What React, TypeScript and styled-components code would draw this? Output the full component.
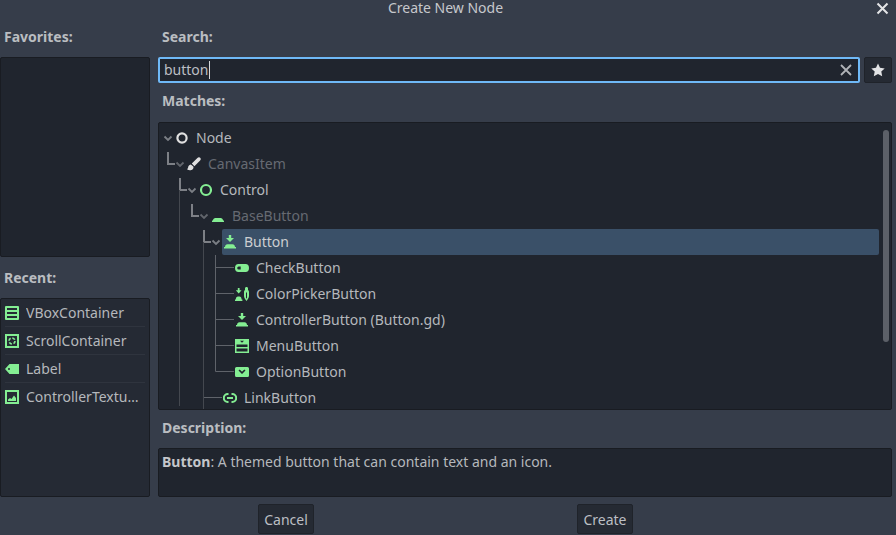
import React from "react";
import styled, { createGlobalStyle } from "styled-components";

const Global = createGlobalStyle`
  html, body { margin: 0; padding: 0; background: #363d4a; }
  body { font-family: "Noto Sans", sans-serif; font-size: 14px; color: #bcbfc3; }
  * { box-sizing: border-box; }
`;

const Window = styled.div`
  position: relative;
  width: 896px;
  height: 535px;
  overflow: hidden;
  background: #363d4a;
`;
const TitleBar = styled.div`
  height: 16px;
  line-height: 16px;
  text-align: center;
  color: #c6c8cc;
  font-size: 14px;
  transform: translateX(-2.5px);
`;
const CloseButton = styled.svg`
  position: absolute;
  right: 7px;
  top: 2px;
  width: 13px;
  height: 13px;
`;
const Columns = styled.div`
  display: grid;
  grid-template-columns: 150px 734px;
  column-gap: 8px;
  padding-top: 10px;
`;
const Column = styled.div`
  display: flex;
  flex-direction: column;
`;
const Heading = styled.div<{ $gap: number; $indent?: number }>`
  height: 21px;
  line-height: 21px;
  font-weight: 700;
  font-size: 14px;
  color: #babdc1;
  margin-bottom: ${(p) => p.$gap}px;
  padding-left: ${(p) => p.$indent ?? 4}px;
`;
const Panel = styled.div<{ $h: number; $mb?: number; $light?: boolean }>`
  position: relative;
  height: ${(p) => p.$h}px;
  margin-bottom: ${(p) => p.$mb ?? 0}px;
  background: ${(p) => (p.$light ? "#252a34" : "#20252e")};
  border: 1px solid #191c22;
  border-radius: 2px;
  overflow: hidden;
`;
const RecentList = styled.div`
  padding: 0;
`;
const RecentRow = styled.div`
  display: flex;
  align-items: center;
  height: 28px;
  margin: 0 4px;
  border-bottom: 1px solid #2f343e;
  &:last-child { border-bottom: none; }
`;
const RecentLabel = styled.span`
  flex: 1;
  min-width: 0;
  white-space: nowrap;
  overflow: hidden;
  text-overflow: ellipsis;
  color: #b5b8bc;
  line-height: 28px;
  margin-right: 4px;
`;
const SearchRow = styled.div`
  display: flex;
  gap: 4px;
  height: 26px;
  margin-bottom: 7px;
`;
const SearchBox = styled.div`
  flex: 1;
  display: flex;
  align-items: center;
  padding: 0 6px 0 4px;
  background: #20252e;
  border: 2px solid #6fb9f7;
  border-radius: 2px;
`;
const SearchText = styled.span`
  color: #bcbfc3;
  line-height: 22px;
`;
const Caret = styled.span`
  display: inline-block;
  width: 1px;
  height: 18px;
  background: #d6d8da;
`;
const Spacer = styled.div`
  flex: 1;
`;
const StarButton = styled.div`
  width: 28px;
  display: flex;
  align-items: center;
  justify-content: center;
  background: #252a33;
  border: 1px solid #1f232a;
  border-radius: 2px;
`;
const TreeLines = styled.svg`
  position: absolute;
  left: -1px;
  top: -1px;
  width: 734px;
  height: 288px;
  pointer-events: none;
`;
const TreeBody = styled.div`
  padding-top: 2px;
`;
const Row = styled.div<{ $depth: number }>`
  position: relative;
  display: flex;
  align-items: center;
  height: 26px;
  padding-left: ${(p) => 3 + p.$depth * 12}px;
`;
const Chevron = styled.svg<{ $hidden?: boolean }>`
  width: 12px;
  height: 12px;
  margin-right: 1px;
  flex: none;
  visibility: ${(p) => (p.$hidden ? "hidden" : "visible")};
`;
const Highlight = styled.div`
  display: flex;
  align-items: center;
  width: 657px;
  height: 26px;
  margin-left: -1px;
  padding-left: 1px;
  background: #3a5068;
  border-radius: 2px;
`;
const IconSlot = styled.svg`
  width: 14px;
  height: 14px;
  margin-right: 7px;
  flex: none;
`;
const NodeName = styled.span<{ $dim?: boolean; $bright?: boolean }>`
  color: ${(p) => (p.$dim ? "#666a72" : p.$bright ? "#ccced1" : "#b5b8bc")};
  line-height: 26px;
  white-space: nowrap;
`;
const Scrollbar = styled.div`
  position: absolute;
  right: 2px;
  top: 7px;
  width: 6px;
  height: 212px;
  background: #5c6068;
  border-radius: 3px;
`;
const Description = styled.div`
  padding: 3px 3px;
  line-height: 20px;
  color: #b5b8bc;
  b { color: #c4c6ca; font-weight: 700; }
`;
const Buttons = styled.div`
  display: flex;
  height: 30px;
  margin-top: 7px;
`;
const Button = styled.div<{ $offset?: number }>`
  width: 56px;
  height: 30px;
  margin-left: ${(p) => p.$offset ?? 0}px;
  line-height: 30px;
  text-align: center;
  background: #252a33;
  border: 1px solid #1f232a;
  border-radius: 2px;
  color: #bcbfc3;
`;

const G = "#84ee93";

const IconNode = ({ c, r }: { c: string; r: number }) => (
  <IconSlot viewBox="0 0 14 14">
    <circle cx="7" cy="7" r={r} fill="none" stroke={c} strokeWidth="2.200" />
  </IconSlot>
);
const IconBrush = () => (
  <IconSlot viewBox="0 0 14 14">
    <path d="M12.600.4c-.8-.5-1.500-.1-2.200.5L4.800 6.600l2.600 2.600 5.700-5.700c.8-.8 1.200-2.200-.5-3.100z" fill="#e0e0e0" />
    <path d="M3.800 7.600C1.800 7.900 1.300 9.300 1.100 10.600c-.1.800-.5 1.300-1.100 1.700 1.800 1.400 4.500 1.200 5.700-.1.900-.9 1-1.900.6-2.700z" fill="#e0e0e0" />
  </IconSlot>
);
const IconBase = () => (
  <IconSlot viewBox="0 0 14 14">
    <path d="M1 13v-1.500h1c0-1.500 1-2.500 2.500-2.500h5c1.500 0 2.500 1 2.500 2.500h1V13z" fill={G} />
  </IconSlot>
);
const IconButton = () => (
  <IconSlot viewBox="0 0 14 14">
    <path d="M5.800 0h2.400v3H11L7 7 3 3h2.800z" fill={G} />
    <path d="M1 13.500V12h1c0-1.500 1-2.800 2.500-2.800h5C11 9.200 12 10.500 12 12h1v1.500z" fill={G} />
  </IconSlot>
);
const IconCheck = () => (
  <IconSlot viewBox="0 0 14 14">
    <path fillRule="evenodd" d="M3.500 3h7a3.500 4 0 0 1 0 8h-7a3.500 4 0 0 1 0-8zm.2 2.500a1.500 1.500 0 1 0 0 3h2v-3z" fill={G} />
  </IconSlot>
);
const IconPicker = () => (
  <IconSlot viewBox="0 0 14 14">
    <path d="M2.800 1h1.800v2.200h2L3.700 6.400.8 3.200h2z" fill={G} />
    <path d="M0 14v-1.400h.8C.8 10.600 1.700 9.400 3 9.400h1.400c1.300 0 2.200 1.200 2.200 3.200h.8V14z" fill={G} />
    <path fillRule="evenodd" d="M11.500 0c1 0 1.500.7 1.500 1.600v1.500c.7.400 1 1.100 1 2v4c0 1.600-1.200 3.500-2.500 4.900C10.200 12.600 9 10.700 9 9.100v-4c0-.9.300-1.600 1-2V1.600C10 .7 10.500 0 11.500 0zm-.5 5.500v5.300l.5.900.5-.9V5.500z" fill={G} />
  </IconSlot>
);
const IconMenu = () => (
  <IconSlot viewBox="0 0 14 14">
    <path fillRule="evenodd" d="M0 0h14v14H0zm1.500 5.500v2.500h11V5.500zm0 4V12.500h11V9.500zM5 1.800l2 2 2-2z" fill={G} />
  </IconSlot>
);
const IconOption = () => (
  <IconSlot viewBox="0 0 14 14">
    <path fillRule="evenodd" d="M1.500 2h11A1.500 1.500 0 0 1 14 3.500v7a1.500 1.500 0 0 1-1.500 1.500h-11A1.500 1.500 0 0 1 0 10.500v-7A1.500 1.500 0 0 1 1.500 2zM3.500 5.500L7 9l3.500-3.500-1.200-1.100L7 6.700 4.700 4.400z" fill={G} />
  </IconSlot>
);
const IconLink = () => (
  <IconSlot viewBox="0 0 14 14">
    <path d="M5.500 3H4.800a4 4 0 0 0 0 8h.7M8.500 3h.7a4 4 0 0 1 0 8h-.7" fill="none" stroke={G} strokeWidth="2" />
    <path d="M4 7h6" stroke={G} strokeWidth="2" />
  </IconSlot>
);
const IconVBox = () => (
  <IconSlot viewBox="0 0 14 14">
    <path fillRule="evenodd" d="M1 0h12a1 1 0 0 1 1 1v12a1 1 0 0 1-1 1H1a1 1 0 0 1-1-1V1a1 1 0 0 1 1-1zM2 2v2h10V2zm0 4v2h10V6zm0 4v2h10v-2z" fill={G} />
  </IconSlot>
);
const IconScroll = () => (
  <IconSlot viewBox="0 0 14 14">
    <path fillRule="evenodd" d="M0 0h14v14H0zm2 2v10h10V2z" fill={G} />
    <circle cx="7" cy="7" r="3" fill="none" stroke={G} strokeWidth="1.600" strokeDasharray="3 1.700" />
  </IconSlot>
);
const IconLabel = () => (
  <IconSlot viewBox="0 0 14 14">
    <path fillRule="evenodd" d="M4.500 2H14v10H4.500L0 7zM4 6a1 1 0 1 0 0 2 1 1 0 0 0 0-2z" fill={G} />
  </IconSlot>
);
const IconTexture = () => (
  <IconSlot viewBox="0 0 14 14">
    <path fillRule="evenodd" d="M0 0h14v14H0zm2 2v10h10V2z" fill={G} />
    <path d="M3 11V9.500L5 8l1.500 1L9 5.500l2 2.500v3z" fill={G} />
  </IconSlot>
);

const Chev = ({ dim }: { dim?: boolean }) => (
  <Chevron viewBox="0 0 12 12">
    <path d="M2.500 4.500L6 8l3.500-3.500" fill="none" stroke={dim ? "#62666d" : "#7b7f85"} strokeWidth="1.800" />
  </Chevron>
);

const recents: [React.ReactNode, string][] = [
  [<IconVBox />, "VBoxContainer"],
  [<IconScroll />, "ScrollContainer"],
  [<IconLabel />, "Label"],
  [<IconTexture />, "ControllerTextureButton"],
];

export default function App() {
  return (
    <Window>
      <Global />
      <TitleBar>Create New Node</TitleBar>
      <CloseButton viewBox="0 0 13 13">
        <path d="M1.500 1.500l10 10M11.500 1.500l-10 10" stroke="#e4e5e7" strokeWidth="2" />
      </CloseButton>
      <Columns>
        <Column>
          <Heading $gap={10}>Favorites:</Heading>
          <Panel $h={200} $mb={10} />
          <Heading $gap={10}>Recent:</Heading>
          <Panel $h={199} $light>
            <RecentList>
              {recents.map(([icon, name]) => (
                <RecentRow key={name}>
                  {icon}
                  <RecentLabel>{name}</RecentLabel>
                </RecentRow>
              ))}
            </RecentList>
          </Panel>
        </Column>
        <Column>
          <Heading $gap={10}>Search:</Heading>
          <SearchRow>
            <SearchBox>
              <SearchText>button</SearchText>
              <Caret />
              <Spacer />
              <svg width="12" height="12" viewBox="0 0 12 12">
                <path d="M1 1l10 10M11 1L1 11" stroke="#b0b3b7" strokeWidth="1.800" />
              </svg>
            </SearchBox>
            <StarButton>
              <svg width="14" height="14" viewBox="0 0 14 14">
                <path d="M7 .5l2 4.300 4.700.6-3.400 3.200.9 4.700L7 11l-4.200 2.300.9-4.700L.3 5.400 5 4.800z" fill="#e2e3e5" />
              </svg>
            </StarButton>
          </SearchRow>
          <Heading $gap={11}>Matches:</Heading>
          <Panel $h={288} $mb={7}>
            <TreeBody>
              <Row $depth={0}><Chev /><IconNode c="#e0e0e0" r={4.6} /><NodeName>Node</NodeName></Row>
              <Row $depth={1}><Chev dim /><IconBrush /><NodeName $dim>CanvasItem</NodeName></Row>
              <Row $depth={2}><Chev /><IconNode c={G} r={5} /><NodeName>Control</NodeName></Row>
              <Row $depth={3}><Chev dim /><IconBase /><NodeName $dim>BaseButton</NodeName></Row>
              <Row $depth={4}>
                <Chev />
                <Highlight>
                  <IconButton />
                  <NodeName $bright>Button</NodeName>
                </Highlight>
              </Row>
              <Row $depth={5}><Chevron viewBox="0 0 12 12" $hidden /><IconCheck /><NodeName>CheckButton</NodeName></Row>
              <Row $depth={5}><Chevron viewBox="0 0 12 12" $hidden /><IconPicker /><NodeName>ColorPickerButton</NodeName></Row>
              <Row $depth={5}><Chevron viewBox="0 0 12 12" $hidden /><IconButton /><NodeName>ControllerButton (Button.gd)</NodeName></Row>
              <Row $depth={5}><Chevron viewBox="0 0 12 12" $hidden /><IconMenu /><NodeName>MenuButton</NodeName></Row>
              <Row $depth={5}><Chevron viewBox="0 0 12 12" $hidden /><IconOption /><NodeName>OptionButton</NodeName></Row>
              <Row $depth={4}><Chevron viewBox="0 0 12 12" $hidden /><IconLink /><NodeName>LinkButton</NodeName></Row>
            </TreeBody>
            <TreeLines viewBox="158 122 734 288">
              <g fill="none" stroke="#7d8086" strokeWidth="2">
                <path d="M168 152v12h7" />
                <path d="M180 178v12h7" />
                <path d="M192 204v12h7" />
                <path d="M204 230v12h7" />
              </g>
              <g fill="none" stroke="#44484f" strokeWidth="1">
                <path d="M179.500 190v216" />
                <path d="M203.500 242v168" />
              </g>
              <g fill="none" stroke="#5f636a" strokeWidth="1">
                <path d="M215.500 255v116.500H234" />
                <path d="M216 267.500h18M216 293.500h18M216 319.500h18M216 345.500h18" />
                <path d="M204 397.500h18" />
              </g>
            </TreeLines>
            <Scrollbar />
          </Panel>
          <Heading $gap={10}>Description:</Heading>
          <Panel $h={49}>
            <Description><b>Button</b>: A themed button that can contain text and an icon.</Description>
          </Panel>
        </Column>
      </Columns>
      <Buttons>
        <Button $offset={258}>Cancel</Button>
        <Button $offset={263}>Create</Button>
      </Buttons>
    </Window>
  );
}
